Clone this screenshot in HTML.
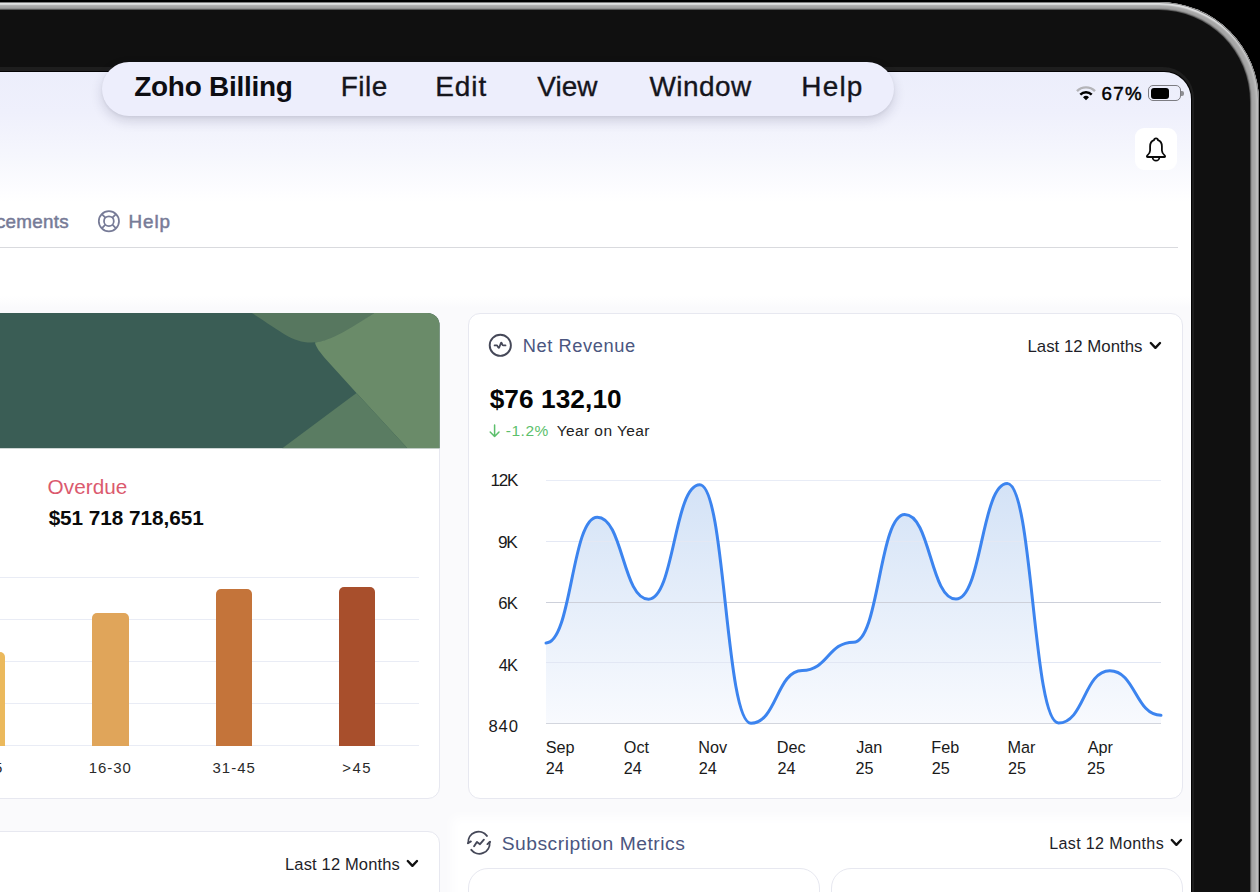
<!DOCTYPE html>
<html><head><meta charset="utf-8">
<style>
*{margin:0;padding:0;box-sizing:border-box}
html,body{width:1260px;height:892px;overflow:hidden;background:#000;font-family:"Liberation Sans",sans-serif}
.a{position:absolute}
.t{position:absolute;white-space:nowrap;line-height:1;font-family:"Liberation Sans",sans-serif}
#rim{left:-400px;top:1.8px;width:1658.5px;height:1400px;border-radius:100px;background:#a6a6a6;box-shadow:inset 0 0 0 0.9px #7e7e7e,inset 0 3.6px 1.6px -0.6px #e2e3e4,inset -4.5px 0 2.5px -1.5px #c0c0c0}
#bez{left:-400px;top:10px;width:1649.5px;height:1400px;border-radius:91.5px;background:#101010;box-shadow:0 0 1.6px 0.9px rgba(0,0,0,0.6)}
#ring{left:-400px;top:66.5px;width:1593.8px;height:1400px;border-radius:31px;background:#1e1e1e}
#screen{left:-400px;top:72px;width:1591px;height:1400px;border-radius:27px;overflow:hidden;box-shadow:0 0 0 1.1px #030303;
  background:linear-gradient(#eceefb 0px,#eff0fc 40px,#f6f7fd 85px,#fdfdff 120px,#ffffff 130px,#fff 224px,#fafafc 236px,#fafafc 100%)}
#menubar{left:102px;top:62px;width:792px;height:54px;border-radius:27px;background:#edeefc;box-shadow:0 5px 12px rgba(40,40,80,0.17),0 1px 3px rgba(0,0,0,0.06)}
.card{position:absolute;background:#fff;border:1px solid #e7e8f0;border-radius:12px}
</style></head><body>
<div id="rim" class="a"></div>
<div id="bez" class="a"></div>
<div id="ring" class="a"></div>
<div id="screen" class="a"></div>
<div class="a" style="left:0;top:246.5px;width:1178px;height:1.3px;background:#d9dade"></div>

<!-- bell box -->
<div class="a" style="left:1135px;top:128px;width:42px;height:42px;border-radius:9px;background:#fff"></div>
<svg class="a" style="left:1135px;top:128px" width="42" height="42" viewBox="0 0 42 42">
 <path d="M21 10.3c-1.1 0-1.9.8-2 1.8-2.6.9-3.9 3.2-3.9 6.2v4.2c0 2-1.1 3.6-2.9 5.2-.6.6-.3 1.3.5 1.3h16.6c.8 0 1.1-.7.5-1.3-1.8-1.6-2.9-3.2-2.9-5.2v-4.2c0-3-1.3-5.3-3.9-6.2-.1-1-.9-1.8-2-1.8z" fill="none" stroke="#0a0a0a" stroke-width="1.8" stroke-linejoin="round"/>
 <path d="M17.6 29.2a3.4 3.4 0 0 0 6.8 0" fill="none" stroke="#0a0a0a" stroke-width="1.7"/>
</svg>

<!-- status: wifi & battery -->
<svg class="a" style="left:1074px;top:84px" width="24" height="18" viewBox="0 0 24 18">
 <path d="M3 7.2 A12.5 12.5 0 0 1 21 7.2" fill="none" stroke="#b4b4b8" stroke-width="2.4"/>
 <path d="M6.3 10.6 A8 8 0 0 1 17.7 10.6" fill="none" stroke="#000" stroke-width="2.4"/>
 <path d="M12 16.2 L9 13.3 A4.3 4.3 0 0 1 15 13.3 Z" fill="#000"/>
</svg>
<div class="a" style="left:1148px;top:85px;width:32.5px;height:16px;border-radius:5px;border:1.3px solid #7d7d82"></div>
<div class="a" style="left:1150.5px;top:87.5px;width:18.5px;height:11px;border-radius:3px;background:#000"></div>
<div class="a" style="left:1181px;top:90.5px;width:2.5px;height:5px;border-radius:0 2px 2px 0;background:#8e8e93"></div>

<!-- menubar -->
<div id="menubar" class="a"></div>

<!-- nav help icon -->
<svg class="a" style="left:96px;top:209px" width="26" height="26" viewBox="0 0 26 26">
 <circle cx="12.9" cy="12.2" r="10.1" fill="none" stroke="#777b97" stroke-width="1.75"/>
 <circle cx="12.9" cy="12.2" r="4.9" fill="none" stroke="#777b97" stroke-width="1.75"/>
 <path d="M5.8 5.1 L9.4 8.7 M20 5.1 L16.4 8.7 M5.8 19.3 L9.4 15.7 M20 19.3 L16.4 15.7" stroke="#777b97" stroke-width="1.75"/>
</svg>

<!-- left card -->
<div class="card" style="left:-20px;top:312.5px;width:460px;height:486px;"></div>
<svg class="a" style="left:0;top:312.5px" width="440" height="136" viewBox="0 312.5 440 136">
 <defs><clipPath id="bc"><path d="M-20 312.5 H427.5 A12 12 0 0 1 439.5 324.5 V448 H-20 Z"/></clipPath></defs>
 <g clip-path="url(#bc)">
  <rect x="-20" y="312" width="470" height="137" fill="#3a5d55"/>
  <path d="M251 312 C280 330 292 342 311 342 C332 342 350 330 375 312 Z" fill="#57775f"/>
  <path d="M375 312 L445 312 L445 448 L407.6 448 L356.5 392.4 L327 360 C320 352 316 347 315 342 C332 340 350 328 375 312 Z" fill="#6a8b69"/>
  <path d="M356.5 392.4 L282 448 L407.6 448 Z" fill="#5a7c62"/>
 </g>
</svg>
<!-- bar grid -->
<div class="a" style="left:0;top:577px;width:419px;height:1px;background:#e9ecf5"></div>
<div class="a" style="left:0;top:619px;width:419px;height:1px;background:#e9ecf5"></div>
<div class="a" style="left:0;top:661px;width:419px;height:1px;background:#e9ecf5"></div>
<div class="a" style="left:0;top:703px;width:419px;height:1px;background:#e9ecf5"></div>
<div class="a" style="left:0;top:745px;width:419px;height:1px;background:#e9ecf5"></div>
<div class="a" style="left:-32px;top:652px;width:37px;height:94px;border-radius:5px 5px 0 0;background:#ebb95c"></div>
<div class="a" style="left:92px;top:613px;width:36.6px;height:133px;border-radius:5px 5px 0 0;background:#e0a55a"></div>
<div class="a" style="left:215.5px;top:588.5px;width:36.3px;height:157.5px;border-radius:5px 5px 0 0;background:#c4743a"></div>
<div class="a" style="left:339px;top:587px;width:36.3px;height:159px;border-radius:5px 5px 0 0;background:#a84f2c"></div>

<!-- net revenue card -->
<div class="card" style="left:467.5px;top:312.5px;width:715px;height:486px;"></div>
<svg class="a" style="left:487px;top:333px" width="26" height="26" viewBox="0 0 26 26">
 <circle cx="13.3" cy="12.3" r="10.6" fill="none" stroke="#454858" stroke-width="1.9"/>
 <path d="M7.6 12.4 H9.6 Q10.2 12.4 10.6 13.2 L11.4 14.6 Q11.8 15.2 12.2 14.5 L13.9 10.2 Q14.3 9.3 14.7 10.2 L15.3 11.7 Q15.6 12.4 16.4 12.4 H18.5" fill="none" stroke="#454858" stroke-width="1.8" stroke-linejoin="round" stroke-linecap="round"/>
</svg>
<svg class="a" style="left:1149px;top:341px" width="14" height="10" viewBox="0 0 14 10">
 <path d="M1.8 2 L6.4 6.8 L11 2" fill="none" stroke="#111" stroke-width="2.4" stroke-linecap="round" stroke-linejoin="round"/>
</svg>
<svg class="a" style="left:488px;top:423px" width="14" height="16" viewBox="0 0 14 16">
 <path d="M6.6 2 V13.5 M2.2 9 L6.6 13.5 L11 9" fill="none" stroke="#5cbf6c" stroke-width="1.5" stroke-linecap="round" stroke-linejoin="round"/>
</svg>
<svg class="a" style="left:0;top:0" width="1260" height="892" viewBox="0 0 1260 892">
 <defs><linearGradient id="ag" x1="0" y1="480" x2="0" y2="723" gradientUnits="userSpaceOnUse">
  <stop offset="0" stop-color="#d3e2f6"/><stop offset="1" stop-color="#f8fafe"/></linearGradient></defs>
 <path d="M546.00,643.00 C571.62,643.00 571.62,517.20 597.25,517.20 C622.88,517.20 622.88,599.20 648.50,599.20 C674.12,599.20 674.12,484.80 699.75,484.80 C725.38,484.80 725.38,723.20 751.00,723.20 C776.62,723.20 776.62,670.50 802.25,670.50 C827.88,670.50 827.88,642.20 853.50,642.20 C879.12,642.20 879.12,514.50 904.75,514.50 C930.38,514.50 930.38,599.10 956.00,599.10 C981.62,599.10 981.62,483.60 1007.25,483.60 C1032.88,483.60 1032.88,723.00 1058.50,723.00 C1084.12,723.00 1084.12,670.70 1109.75,670.70 C1135.38,670.70 1135.38,715.30 1161.00,715.30 L1161,723.2 L546,723.2 Z" fill="url(#ag)"/>
 <g stroke-width="1.2">
 <line x1="546" y1="480.5" x2="1161" y2="480.5" stroke="#e8ecf6"/>
 <line x1="546" y1="541.5" x2="1161" y2="541.5" stroke="#e4e8f4"/>
 <line x1="546" y1="602.5" x2="1161" y2="602.5" stroke="#cdd0da"/>
 <line x1="546" y1="662.5" x2="1161" y2="662.5" stroke="#e2e7f4"/>
 <line x1="546" y1="723.5" x2="1161" y2="723.5" stroke="#d3d6de"/>
 </g>
 <path d="M546.00,643.00 C571.62,643.00 571.62,517.20 597.25,517.20 C622.88,517.20 622.88,599.20 648.50,599.20 C674.12,599.20 674.12,484.80 699.75,484.80 C725.38,484.80 725.38,723.20 751.00,723.20 C776.62,723.20 776.62,670.50 802.25,670.50 C827.88,670.50 827.88,642.20 853.50,642.20 C879.12,642.20 879.12,514.50 904.75,514.50 C930.38,514.50 930.38,599.10 956.00,599.10 C981.62,599.10 981.62,483.60 1007.25,483.60 C1032.88,483.60 1032.88,723.00 1058.50,723.00 C1084.12,723.00 1084.12,670.70 1109.75,670.70 C1135.38,670.70 1135.38,715.30 1161.00,715.30" fill="none" stroke="#3c84ef" stroke-width="3" stroke-linecap="round"/>
</svg>

<div class="a" style="left:0;top:700px;width:1191px;height:192px;overflow:hidden"><div class="a" style="left:452px;top:117px;width:800px;height:120px;background:#fff;filter:blur(6px)"></div></div>
<!-- bottom left card -->
<div class="card" style="left:-20px;top:831px;width:460px;height:200px;"></div>
<svg class="a" style="left:406px;top:859px" width="14" height="10" viewBox="0 0 14 10">
 <path d="M1.8 2 L6.4 6.8 L11 2" fill="none" stroke="#111" stroke-width="2.4" stroke-linecap="round" stroke-linejoin="round"/>
</svg>
<!-- subscription metrics -->
<svg class="a" style="left:460px;top:825px" width="40" height="35" viewBox="0 0 40 35">
 <g fill="none" stroke="#454858" stroke-width="1.9" stroke-linecap="round" stroke-linejoin="round">
 <path d="M8.3 17.9 A10.3 10.3 0 0 1 26.9 10.9"/>
 <path d="M7.9 18.3 L10.9 16.4"/>
 <path d="M29.6 17.3 A10.3 10.3 0 0 1 11.3 24.8"/>
 <path d="M30.1 16.8 L27.4 19.1"/>
 <path d="M14.1 21.2 L16.9 16.9 L20 19.2 L23.9 14.7"/>
 </g>
</svg>
<svg class="a" style="left:1170px;top:838px" width="14" height="10" viewBox="0 0 14 10">
 <path d="M1.8 2 L6.4 6.8 L11 2" fill="none" stroke="#111" stroke-width="2.4" stroke-linecap="round" stroke-linejoin="round"/>
</svg>
<div class="card" style="left:467.5px;top:868px;width:352px;height:200px;border-radius:20px"></div>
<div class="card" style="left:830.5px;top:868px;width:352px;height:200px;border-radius:20px"></div>

<div class="t" style="left:134.16px;top:73.42px;font-size:27.97px;font-weight:bold;letter-spacing:-0.261px;color:#0d0d12;">Zoho Billing</div>
<div class="t" style="left:340.69px;top:73.42px;font-size:27.97px;font-weight:normal;letter-spacing:0.488px;color:#15151c;-webkit-text-stroke:0.35px #15151c;">File</div>
<div class="t" style="left:435.19px;top:73.42px;font-size:27.97px;font-weight:normal;letter-spacing:0.946px;color:#15151c;-webkit-text-stroke:0.35px #15151c;">Edit</div>
<div class="t" style="left:537.26px;top:73.42px;font-size:27.97px;font-weight:normal;letter-spacing:0.044px;color:#15151c;-webkit-text-stroke:0.35px #15151c;">View</div>
<div class="t" style="left:649.56px;top:73.42px;font-size:27.97px;font-weight:normal;letter-spacing:0.413px;color:#15151c;-webkit-text-stroke:0.35px #15151c;">Window</div>
<div class="t" style="left:801.29px;top:73.42px;font-size:27.97px;font-weight:normal;letter-spacing:1.182px;color:#15151c;-webkit-text-stroke:0.35px #15151c;">Help</div>
<div class="t" style="left:1101.47px;top:84.71px;font-size:18.70px;font-weight:normal;letter-spacing:1.376px;color:#000;-webkit-text-stroke:0.5px #000;">67%</div>
<div class="t" style="left:128.55px;top:212.69px;font-size:18.84px;font-weight:normal;letter-spacing:0.930px;color:#777b97;-webkit-text-stroke:0.5px #777b97;">Help</div>
<div class="t" style="left:-70.51px;top:212.69px;font-size:18.84px;font-weight:normal;letter-spacing:0.250px;color:#777b97;-webkit-text-stroke:0.5px #777b97;">Announcements</div>
<div class="t" style="left:47.62px;top:476.98px;font-size:20.72px;font-weight:normal;letter-spacing:0.031px;color:#db5a6e;">Overdue</div>
<div class="t" style="left:48.64px;top:508.18px;font-size:20.72px;font-weight:bold;letter-spacing:-0.026px;color:#0a0a0a;">$51 718 718,651</div>
<div class="t" style="left:88.68px;top:761.21px;font-size:14.93px;font-weight:normal;letter-spacing:0.976px;color:#2a2a2a;">16-30</div>
<div class="t" style="left:212.44px;top:761.21px;font-size:14.93px;font-weight:normal;letter-spacing:1.045px;color:#2a2a2a;">31-45</div>
<div class="t" style="left:342.25px;top:761.21px;font-size:14.93px;font-weight:normal;letter-spacing:1.521px;color:#2a2a2a;">>45</div>
<div class="t" style="left:-28.46px;top:761.21px;font-size:14.93px;font-weight:normal;letter-spacing:0.330px;color:#2a2a2a;">0-15</div>
<div class="t" style="left:522.79px;top:337.18px;font-size:18.26px;font-weight:normal;letter-spacing:0.573px;color:#4b5680;">Net Revenue</div>
<div class="t" style="left:1027.51px;top:339.21px;font-size:16.81px;font-weight:normal;letter-spacing:0.010px;color:#1e1e28;">Last 12 Months</div>
<div class="t" style="left:489.67px;top:386.10px;font-size:26.23px;font-weight:bold;letter-spacing:0.087px;color:#050505;">$76 132,10</div>
<div class="t" style="left:505.70px;top:423.02px;font-size:15.51px;font-weight:normal;letter-spacing:0.557px;color:#5cbf6c;">-1.2%</div>
<div class="t" style="left:556.65px;top:423.02px;font-size:15.51px;font-weight:normal;letter-spacing:0.422px;color:#1e1e1e;">Year on Year</div>
<div class="t" style="left:490.42px;top:471.56px;font-size:17.10px;font-weight:normal;letter-spacing:-1.272px;color:#1a1a1a;">12K</div>
<div class="t" style="left:497.98px;top:533.54px;font-size:17.25px;font-weight:normal;letter-spacing:-1.249px;color:#1a1a1a;">9K</div>
<div class="t" style="left:498.17px;top:596.33px;font-size:16.67px;font-weight:normal;letter-spacing:-0.733px;color:#1a1a1a;">6K</div>
<div class="t" style="left:498.63px;top:657.38px;font-size:16.38px;font-weight:normal;letter-spacing:-0.847px;color:#1a1a1a;">4K</div>
<div class="t" style="left:488.49px;top:719.03px;font-size:16.67px;font-weight:normal;letter-spacing:0.821px;color:#1a1a1a;">840</div>
<div class="t" style="left:545.77px;top:738.90px;font-size:16.23px;font-weight:normal;letter-spacing:0.000px;color:#1a1a1a;">Sep</div>
<div class="t" style="left:545.69px;top:760.30px;font-size:16.23px;font-weight:normal;letter-spacing:0.000px;color:#1a1a1a;">24</div>
<div class="t" style="left:623.83px;top:738.90px;font-size:16.23px;font-weight:normal;letter-spacing:0.000px;color:#1a1a1a;">Oct</div>
<div class="t" style="left:623.79px;top:760.30px;font-size:16.23px;font-weight:normal;letter-spacing:0.000px;color:#1a1a1a;">24</div>
<div class="t" style="left:698.26px;top:738.90px;font-size:16.23px;font-weight:normal;letter-spacing:0.000px;color:#1a1a1a;">Nov</div>
<div class="t" style="left:698.79px;top:760.30px;font-size:16.23px;font-weight:normal;letter-spacing:0.000px;color:#1a1a1a;">24</div>
<div class="t" style="left:776.86px;top:738.90px;font-size:16.23px;font-weight:normal;letter-spacing:0.000px;color:#1a1a1a;">Dec</div>
<div class="t" style="left:777.39px;top:760.30px;font-size:16.23px;font-weight:normal;letter-spacing:0.000px;color:#1a1a1a;">24</div>
<div class="t" style="left:856.16px;top:738.90px;font-size:16.23px;font-weight:normal;letter-spacing:0.000px;color:#1a1a1a;">Jan</div>
<div class="t" style="left:855.59px;top:760.30px;font-size:16.23px;font-weight:normal;letter-spacing:0.000px;color:#1a1a1a;">25</div>
<div class="t" style="left:931.26px;top:738.90px;font-size:16.23px;font-weight:normal;letter-spacing:0.000px;color:#1a1a1a;">Feb</div>
<div class="t" style="left:931.79px;top:760.30px;font-size:16.23px;font-weight:normal;letter-spacing:0.000px;color:#1a1a1a;">25</div>
<div class="t" style="left:1007.46px;top:738.90px;font-size:16.23px;font-weight:normal;letter-spacing:0.000px;color:#1a1a1a;">Mar</div>
<div class="t" style="left:1007.99px;top:760.30px;font-size:16.23px;font-weight:normal;letter-spacing:0.000px;color:#1a1a1a;">25</div>
<div class="t" style="left:1087.66px;top:738.90px;font-size:16.23px;font-weight:normal;letter-spacing:0.000px;color:#1a1a1a;">Apr</div>
<div class="t" style="left:1086.89px;top:760.30px;font-size:16.23px;font-weight:normal;letter-spacing:0.000px;color:#1a1a1a;">25</div>
<div class="t" style="left:501.63px;top:833.72px;font-size:19.28px;font-weight:normal;letter-spacing:0.511px;color:#4b5680;">Subscription Metrics</div>
<div class="t" style="left:1049.17px;top:835.13px;font-size:16.09px;font-weight:normal;letter-spacing:0.354px;color:#1e1e28;">Last 12 Months</div>
<div class="t" style="left:285.04px;top:856.86px;font-size:16.52px;font-weight:normal;letter-spacing:0.144px;color:#1e1e28;">Last 12 Months</div>
</body></html>
